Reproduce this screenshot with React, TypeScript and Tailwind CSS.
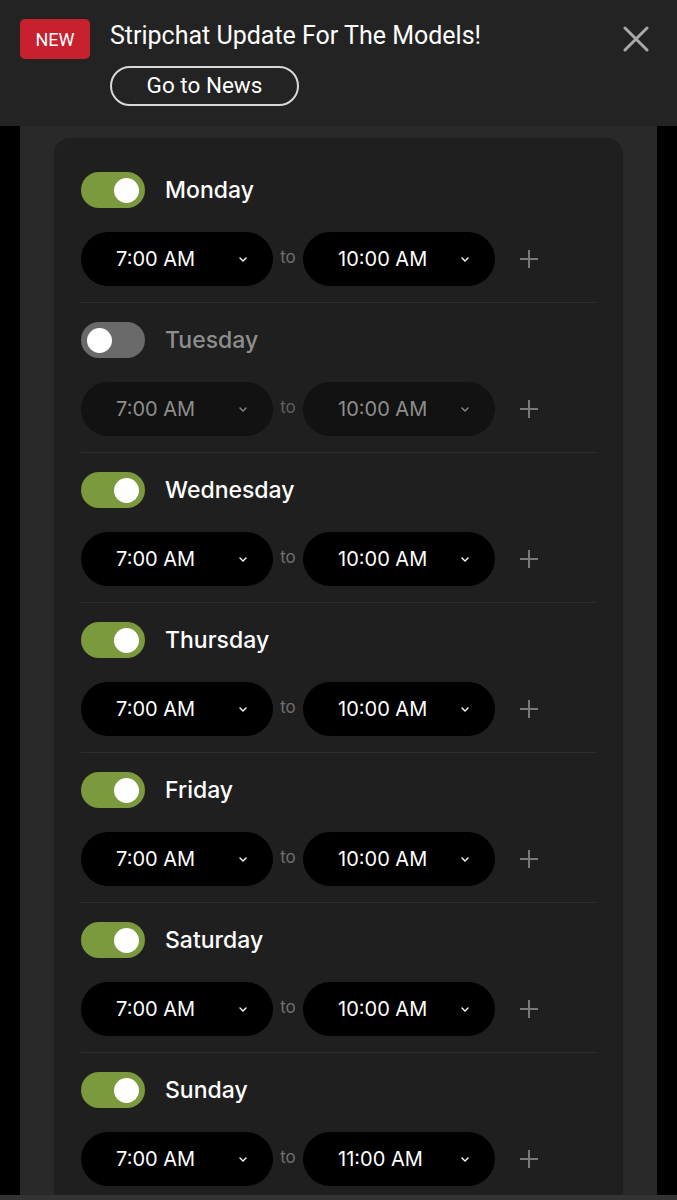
import React from "react";

const days = [
  { name: "Monday", on: true, from: "7:00 AM", to: "10:00 AM" },
  { name: "Tuesday", on: false, from: "7:00 AM", to: "10:00 AM" },
  { name: "Wednesday", on: true, from: "7:00 AM", to: "10:00 AM" },
  { name: "Thursday", on: true, from: "7:00 AM", to: "10:00 AM" },
  { name: "Friday", on: true, from: "7:00 AM", to: "10:00 AM" },
  { name: "Saturday", on: true, from: "7:00 AM", to: "10:00 AM" },
  { name: "Sunday", on: true, from: "7:00 AM", to: "11:00 AM" },
];

function Chevron({ on }: { on: boolean }) {
  return (
    <svg width="10" height="7" viewBox="0 0 10 7" className={on ? "text-white" : "text-[#8a8a8a]"}>
      <path d="M2 2 L5 5 L8 2" fill="none" stroke="currentColor" strokeWidth="1.4" strokeLinecap="round" strokeLinejoin="round" />
    </svg>
  );
}

function Select({ value, on }: { value: string; on: boolean }) {
  return (
    <div
      className={`w-[192px] h-[54px] rounded-full flex items-center pl-[35px] pr-[25px] ${
        on ? "bg-black text-white" : "bg-[#121212] text-[#8e8e8e]"
      }`}
    >
      <span className="flex-1 text-[20px]">{value}</span>
      <Chevron on={on} />
    </div>
  );
}

function Toggle({ on }: { on: boolean }) {
  return (
    <div
      className={`w-[64px] h-[36px] rounded-full flex items-center px-[6px] ${
        on ? "bg-[#7b9a3d] justify-end" : "bg-[#6a6a6a] justify-start"
      }`}
    >
      <div className="w-[25px] h-[25px] rounded-full bg-white" />
    </div>
  );
}

export default function App() {
  return (
    <div className="w-[677px] h-[1200px] overflow-hidden bg-black flex flex-col" style={{ fontFamily: "Inter, 'Noto Sans', sans-serif" }}>
      <header className="h-[126px] shrink-0 bg-[#232323] flex pl-[20px] pt-[19px] pr-[28px]" style={{ fontFamily: "Roboto, 'Liberation Sans', sans-serif" }}>
        <div className="w-[70px] h-[40px] rounded-[5px] bg-[#c7202e] text-white text-[18px] flex items-center justify-center">NEW</div>
        <div className="ml-[20px] flex-1 flex flex-col">
          <div className="text-white text-[25px] leading-[34px]">Stripchat Update For The Models!</div>
          <div className="mt-[13px] w-[189px] h-[40px] rounded-full border-[2px] border-[#d8d8d8] text-white text-[22.5px] flex items-center justify-center">Go to News</div>
        </div>
        <svg width="26" height="26" viewBox="0 0 26 26" className="mt-[7px]">
          <path d="M2 2 L24 24 M24 2 L2 24" stroke="#a9a9a9" strokeWidth="3" strokeLinecap="round" />
        </svg>
      </header>
      <div className="flex-1 flex px-[20px] min-h-0">
        <div className="flex-1 bg-[#292929] px-[34px] pt-[12px] min-h-0 overflow-hidden">
          <div className="bg-[#1f1f1f] rounded-[16px] px-[27px] pt-[15px] h-[1200px]">
            {days.map((d, i) => (
              <div key={d.name} className={`pt-[19px] pb-[16px] ${i < days.length - 1 ? "border-b-[1px] border-[#2e2e2e]" : ""}`}>
                <div className="flex items-center h-[36px]">
                  <Toggle on={d.on} />
                  <span className={`ml-[20px] text-[23px] font-medium ${d.on ? "text-white" : "text-[#8e8e8e]"}`}>{d.name}</span>
                </div>
                <div className="flex items-center mt-[24px]">
                  <Select value={d.from} on={d.on} />
                  <span className={`w-[30px] text-center text-[17px] -mt-[3px] ${d.on ? "text-[#6f6f6f]" : "text-[#5f5f5f]"}`}>to</span>
                  <Select value={d.to} on={d.on} />
                  <svg width="20" height="20" viewBox="0 0 20 20" className="ml-[24px]">
                    <path d="M10 1 V19 M1 10 H19" stroke="#7a7a7a" strokeWidth="2" />
                  </svg>
                </div>
              </div>
            ))}
          </div>
        </div>
      </div>
      <div className="h-[5px] shrink-0 bg-[#333333]" />
    </div>
  );
}
